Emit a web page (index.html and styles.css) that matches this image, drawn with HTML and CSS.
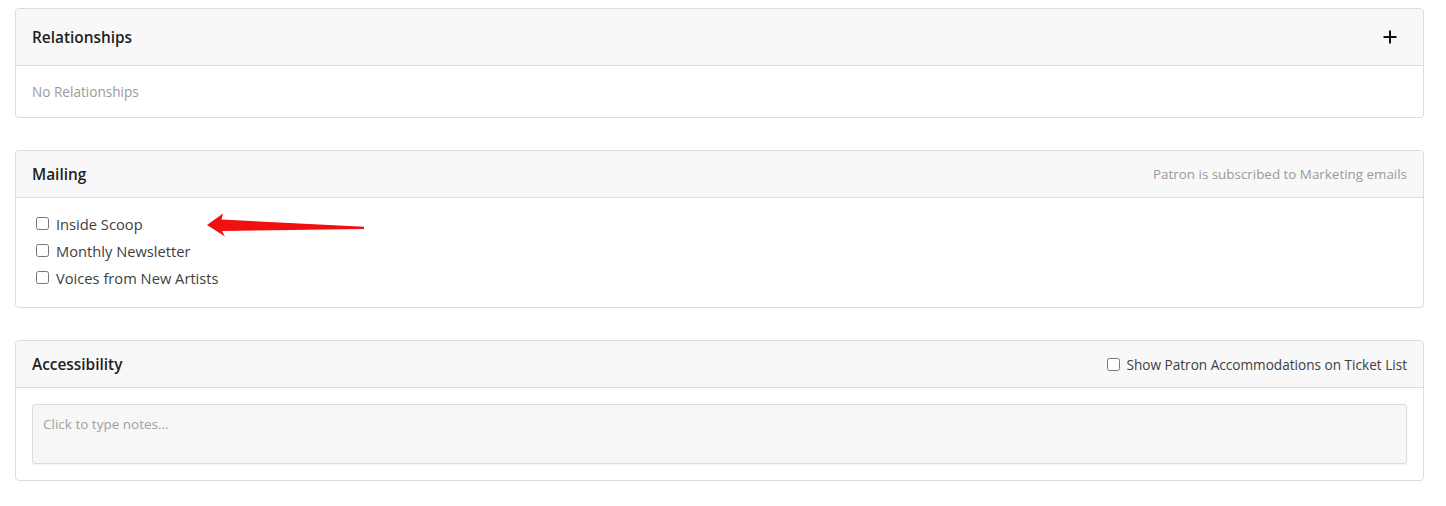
FILE: index.html
```html
<!DOCTYPE html>
<html>
<head>
<meta charset="utf-8">
<link rel="stylesheet" href="styles.css">
</head>
<body>
<div class="page">
  <section class="card">
    <header class="card-header tall">
      <h2 class="card-title">Relationships</h2>
      <button class="add-btn" type="button" aria-label="Add">
        <svg width="14" height="14" viewBox="0 0 14 14"><path d="M7 0.5V13.5M0.5 7H13.5" stroke="#111" stroke-width="2" fill="none"/></svg>
      </button>
    </header>
    <div class="card-body">
      <p class="muted">No Relationships</p>
    </div>
  </section>

  <section class="card">
    <header class="card-header">
      <h2 class="card-title">Mailing</h2>
      <span class="muted header-note">Patron is subscribed to Marketing emails</span>
    </header>
    <div class="card-body list-body">
      <label class="check-row"><input type="checkbox"><span>Inside Scoop</span></label>
      <label class="check-row"><input type="checkbox"><span>Monthly Newsletter</span></label>
      <label class="check-row"><input type="checkbox"><span>Voices from New Artists</span></label>
      <svg class="arrow" width="170" height="30" viewBox="200 210 170 30">
        <path d="M207 225 L223 213.5 L221.5 219.5 L364 226.8 L364 229 L222 231 L225 236.5 Z" fill="#f01010"/>
      </svg>
    </div>
  </section>

  <section class="card">
    <header class="card-header">
      <h2 class="card-title">Accessibility</h2>
      <label class="check-row header-check"><input type="checkbox"><span>Show Patron Accommodations on Ticket List</span></label>
    </header>
    <div class="card-body">
      <div class="notes">Click to type notes...</div>
    </div>
  </section>
</div>
</body>
</html>
```

FILE: styles.css
```css
* { box-sizing: border-box; }
html, body { margin: 0; padding: 0; background: #fff; }
body {
  font-family: "Open Sans", "Noto Sans", sans-serif;
  color: #333;
}
.page {
  padding: 8px 22px 0 15px;
  display: flex;
  flex-direction: column;
  gap: 32px;
}
.card {
  border: 1px solid #dcdcdc;
  border-radius: 4px;
  background: #fff;
  overflow: hidden;
}
.card-header {
  display: flex;
  align-items: center;
  justify-content: space-between;
  background: #f8f8f8;
  border-bottom: 1px solid #dcdcdc;
  height: 47px;
  padding: 0 16px;
}
.card-header.tall { height: 57px; padding-right: 22px; }
.card-title {
  margin: 0;
  font-size: 15.4px;
  font-weight: 600;
  color: #1e1e1e;
}
.add-btn {
  border: 0;
  background: transparent;
  padding: 4px;
  display: flex;
  cursor: pointer;
}
.card-body {
  padding: 16px;
  position: relative;
}
.muted { color: #9a9a9a; font-size: 13.6px; margin: 0; line-height: 19px; }
.header-note { font-size: 13.4px; }
.list-body { padding: 12px 16px 16px 20px; }
.check-row {
  display: flex;
  align-items: center;
  height: 27px;
  font-size: 14.7px;
  color: #404040;
}
.check-row input {
  margin: 0 7px 0 0;
  width: 13px;
  height: 13px;
}
.header-check { height: auto; font-size: 13.6px; }
.header-check input { margin-right: 6px; }
.arrow {
  position: absolute;
  left: 184px;
  top: 12px;
}
.notes {
  height: 60px;
  background: #f7f7f7;
  border: 1px solid #dcdcdc;
  border-radius: 3px;
  padding: 10px 10px;
  font-size: 13.5px;
  color: #a0a0a0;
  box-shadow: 0 1px 2px rgba(0,0,0,0.06);
}
```
